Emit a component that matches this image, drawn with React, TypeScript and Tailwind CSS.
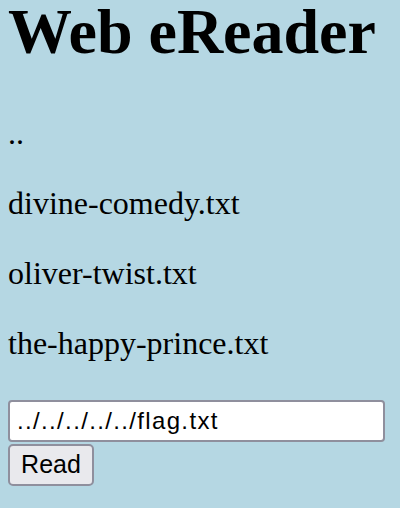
import { useState } from "react";

const files = ["..", "divine-comedy.txt", "oliver-twist.txt", "the-happy-prince.txt"];

export default function App() {
  const [path, setPath] = useState("../../../../../flag.txt");

  return (
    <div className="min-h-[508px] bg-[#b5d7e3] pl-2 text-black font-['Liberation_Serif',serif]">
      <h1 className="text-[64px] leading-[64px] font-bold">Web eReader</h1>

      {/* file list */}
      <div className="mt-[51px] flex flex-col gap-[34px]">
        {files.map((f) => (
          <p key={f} className="text-[32px] leading-[36px]">
            {f}
          </p>
        ))}
      </div>

      <form
        className="mt-[39px] flex flex-col items-start gap-[2px] font-['Liberation_Sans',Arial,sans-serif]"
        onSubmit={(e) => e.preventDefault()}
      >
        <input
          value={path}
          onChange={(e) => setPath(e.target.value)}
          className="w-[377px] h-[42px] bg-white border-2 border-[#8f8f9d] rounded-[4px] px-[7px] text-[24px] tracking-[1.35px] outline-none"
        />
        <button
          type="submit"
          className="w-[86px] h-[42px] bg-[#e9e9ed] border-2 border-[#8f8f9d] rounded-[5px] text-[25px]"
        >
          Read
        </button>
      </form>
    </div>
  );
}
